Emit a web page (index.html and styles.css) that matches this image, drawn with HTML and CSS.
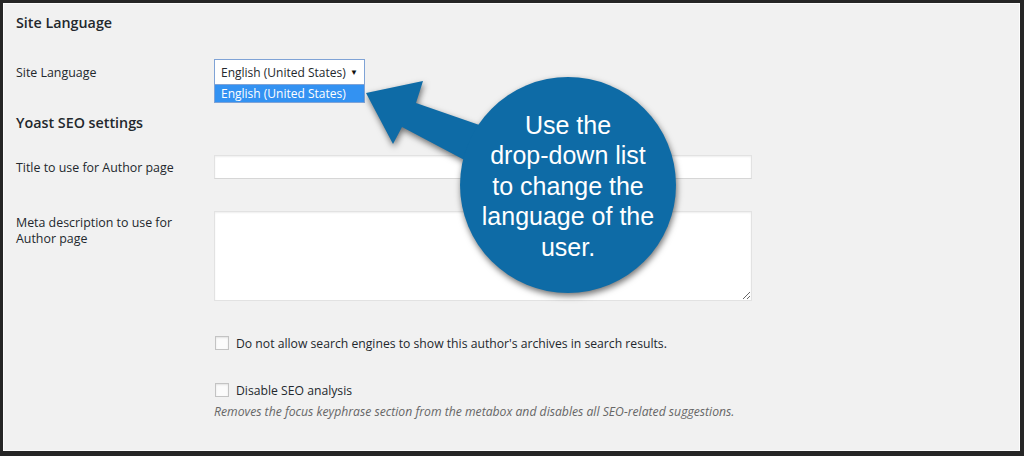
FILE: index.html
```html
<!DOCTYPE html>
<html lang="en">
<head>
  <meta charset="UTF-8">
  <title>Site Language</title>
  <link rel="stylesheet" href="styles.css">
</head>
<body>
  <div class="frame">
    <div class="content">
      <h2 class="section first">Site Language</h2>

      <div class="row row-select">
        <label class="field-label" for="locale">Site Language</label>
        <div class="select-wrap">
          <div class="select" id="locale">
            <span>English (United States)</span>
            <span class="caret">&#9660;</span>
          </div>
          <!-- lista abierta del desplegable -->
          <div class="dropdown">English (United States)</div>
        </div>
      </div>

      <h2 class="section yoast">Yoast SEO settings</h2>

      <div class="row row-title">
        <label class="field-label" for="wpseo_author_title">Title to use for Author page</label>
        <input type="text" id="wpseo_author_title" class="text-input">
      </div>

      <div class="row row-meta">
        <label class="field-label multi" for="wpseo_author_metadesc">Meta description to use for<br>Author page</label>
        <textarea id="wpseo_author_metadesc" class="text-area"></textarea>
      </div>

      <div class="row row-noindex">
        <span></span>
        <label class="check"><input type="checkbox"> <span>Do not allow search engines to show this author's archives in search results.</span></label>
      </div>

      <div class="row row-disable">
        <span></span>
        <div>
          <label class="check"><input type="checkbox"> <span>Disable SEO analysis</span></label>
          <p class="description">Removes the focus keyphrase section from the metabox and disables all SEO-related suggestions.</p>
        </div>
      </div>
    </div>

    <!-- Anotación: flecha y burbuja -->
    <svg class="callout-arrow" width="1024" height="456" viewBox="0 0 1024 456">
      <polygon points="366,93 423,81 416,103 488,128 472,164 402,127 393,144" fill="#0e6ba6"/>
      <circle cx="568" cy="185" r="108" fill="#0e6ba6"/>
    </svg>
    <div class="bubble">Use the<br>drop-down list<br>to change the<br>language of the<br>user.</div>
  </div>
</body>
</html>
```

FILE: styles.css
```css
html, body {
  margin: 0;
  padding: 0;
}
body {
  width: 1024px;
  height: 456px;
  overflow: hidden;
  font-family: 'Open Sans', 'Noto Sans', sans-serif;
  color: #23282d;
}
.frame {
  position: relative;
  box-sizing: border-box;
  width: 1024px;
  height: 456px;
  background-color: #f1f1f1;
  border-style: solid;
  border-color: #262626;
  border-width: 3px 4px 5px 3px;
  box-shadow: inset 1px 1px 0 #fcfcfc, inset -1px -1px 0 #fcfcfc;
}
.content {
  padding: 10px 0 0 13px;
}
h2.section {
  margin: 0;
  font-size: 14.3px;
  font-weight: 600;
  line-height: 20px;
  height: 20px;
}
h2.yoast {
  margin-top: 28px;
}
.row {
  display: grid;
  grid-template-columns: 198px 1fr;
  align-items: center;
}
.field-label {
  font-size: 12.4px;
  line-height: 16px;
  padding-top: 2px;
}
.row-select {
  margin-top: 26px;
  height: 26px;
}
.select-wrap {
  position: relative;
  width: 151px;
  height: 26px;
}
.select {
  box-sizing: border-box;
  height: 26px;
  border: 1px solid #7fa3d6;
  background: #fff;
  display: flex;
  align-items: center;
  justify-content: space-between;
  padding: 1px 6px 0 6px;
  font-size: 12px;
}
.caret {
  font-size: 8px;
  color: #111;
  margin-top: -3px;
}
.dropdown {
  position: absolute;
  left: 0;
  top: 26px;
  box-sizing: border-box;
  width: 151px;
  height: 18px;
  line-height: 18px;
  padding-left: 6px;
  background: #3392f2;
  color: #fff;
  font-size: 12px;
  border: 1px solid #7fa3d6;
  border-top: none;
}
.row-title {
  margin-top: 22px;
}
.text-input {
  box-sizing: border-box;
  width: 538px;
  height: 24px;
  margin: 0;
  border: 1px solid #e2e2e2;
  border-bottom-color: #d6d6d6;
  background: #fff;
  box-shadow: inset 0 1px 2px rgba(0, 0, 0, 0.07);
}
.row-meta {
  margin-top: 32px;
  align-items: start;
}
.field-label.multi {
  padding-top: 4px;
}
.text-area {
  box-sizing: border-box;
  display: block;
  width: 538px;
  height: 90px;
  margin: 0;
  border: 1px solid #e2e2e2;
  background: #fff;
  box-shadow: inset 0 1px 2px rgba(0, 0, 0, 0.07);
  resize: both;
}
.row-noindex {
  margin-top: 30px;
  height: 20px;
}
.row-disable {
  margin-top: 27px;
}
.check {
  display: flex;
  align-items: center;
  font-size: 12.2px;
  line-height: 20px;
}
.check span {
  padding-top: 3px;
}
.check input {
  appearance: none;
  -webkit-appearance: none;
  box-sizing: border-box;
  width: 14px;
  height: 14px;
  margin: 0 7px 0 1px;
  border: 1px solid #c3c3c3;
  background: #fbfbfb;
  box-shadow: inset 0 1px 2px rgba(0, 0, 0, 0.1);
}
.description {
  margin: 2px 0 0 0;
  font-size: 12.2px;
  line-height: 18px;
  font-style: italic;
  color: #666;
}
.callout-arrow {
  position: absolute;
  left: -3px;
  top: -3px;
  filter: drop-shadow(1px 3px 3px rgba(0, 0, 0, 0.55));
  pointer-events: none;
}
.bubble {
  position: absolute;
  left: 457px;
  top: 75px;
  width: 216px;
  height: 216px;
  display: flex;
  align-items: center;
  justify-content: center;
  text-align: center;
  font-family: 'Liberation Sans', Arial, sans-serif;
  font-size: 25px;
  line-height: 30.5px;
  color: #fff;
}
```
